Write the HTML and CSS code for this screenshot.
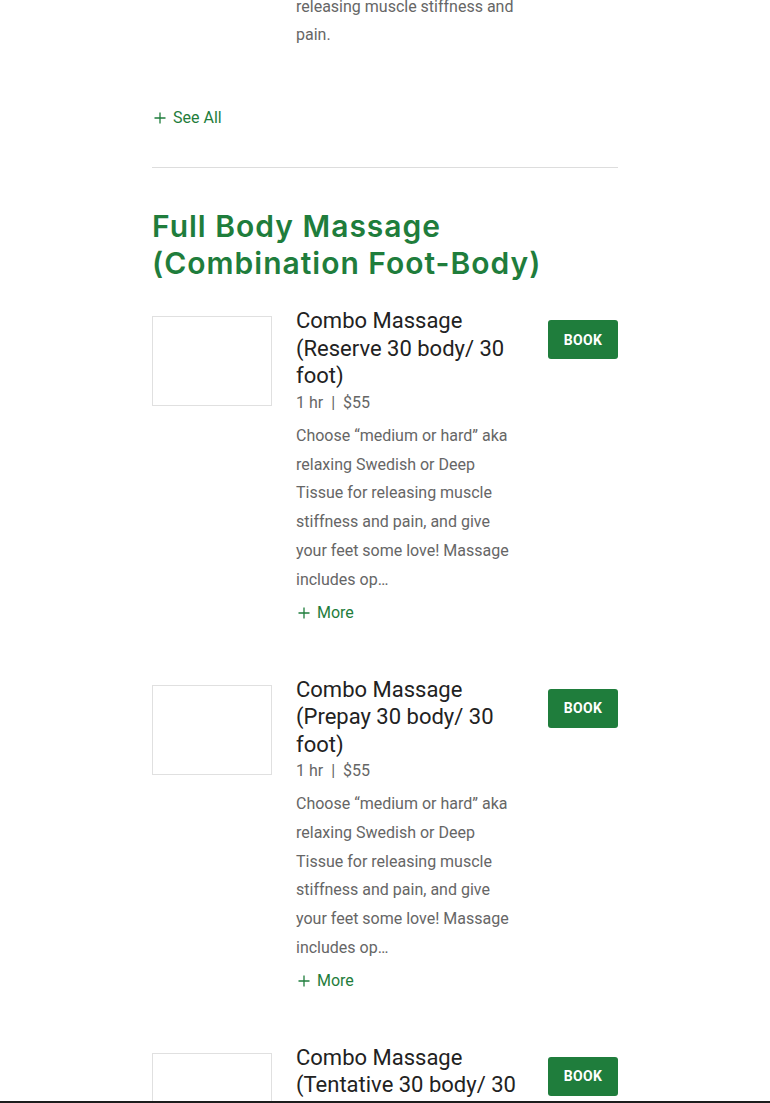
FILE: index.html
```html
<!DOCTYPE html>
<html lang="en">
<head>
  <meta charset="UTF-8">
  <meta name="viewport" content="width=device-width, initial-scale=1.0">
  <title>Services</title>
  <link rel="stylesheet" href="styles.css">
</head>
<body>
  <div class="page">
    <div class="tail">
      <p class="desc">releasing muscle stiffness and pain.</p>
    </div>

    <a class="plus-link see-all" href="#">
      <svg class="plus" viewBox="0 0 12 12"><path d="M6 0.5v11M0.5 6h11"/></svg>
      See All
    </a>

    <hr class="divider">

    <h2 class="category">Full Body Massage (Combination Foot-Body)</h2>

    <div class="service">
      <div class="thumb"></div>
      <div class="info">
        <h3 class="name">Combo Massage (Reserve 30 body/ 30 foot)</h3>
        <div class="meta">1 hr &nbsp;|&nbsp; $55</div>
        <p class="desc">Choose “medium or hard” aka relaxing Swedish or Deep Tissue for releasing muscle stiffness and pain, and give your feet some love! Massage includes op…</p>
        <a class="plus-link" href="#">
          <svg class="plus" viewBox="0 0 12 12"><path d="M6 0.5v11M0.5 6h11"/></svg>
          More
        </a>
      </div>
      <a class="book" href="#">BOOK</a>
    </div>

    <div class="service">
      <div class="thumb"></div>
      <div class="info">
        <h3 class="name">Combo Massage (Prepay 30 body/ 30 foot)</h3>
        <div class="meta">1 hr &nbsp;|&nbsp; $55</div>
        <p class="desc">Choose “medium or hard” aka relaxing Swedish or Deep Tissue for releasing muscle stiffness and pain, and give your feet some love! Massage includes op…</p>
        <a class="plus-link" href="#">
          <svg class="plus" viewBox="0 0 12 12"><path d="M6 0.5v11M0.5 6h11"/></svg>
          More
        </a>
      </div>
      <a class="book" href="#">BOOK</a>
    </div>

    <div class="service">
      <div class="thumb"></div>
      <div class="info">
        <h3 class="name">Combo Massage (Tentative 30 body/ 30 foot)</h3>
        <div class="meta">1 hr &nbsp;|&nbsp; $55</div>
        <p class="desc">Choose “medium or hard” aka relaxing Swedish or Deep Tissue for releasing muscle stiffness and pain, and give your feet some love! Massage includes op…</p>
      </div>
      <a class="book" href="#">BOOK</a>
    </div>
  </div>

  <div class="bottom-bar"></div>
</body>
</html>
```

FILE: styles.css
```css
body {
  margin: 0;
  background-color: #fff;
  font-family: Roboto, "Liberation Sans", Arial, sans-serif;
  color: #222;
  overflow: hidden;
}
.page {
  width: 466px;
  margin: 0 auto;
}
.tail {
  margin-top: -7.4px;
  padding-left: 144px;
  width: 228px;
}
.desc {
  margin: 0;
  font-size: 16px;
  line-height: 28.8px;
  color: #666;
}
.plus-link {
  display: inline-flex;
  align-items: center;
  gap: 7px;
  font-size: 16px;
  line-height: 24px;
  color: #1f7d3c;
  text-decoration: none;
}
.plus {
  width: 12px;
  height: 12px;
  stroke: #1f7d3c;
  stroke-width: 1.3;
  fill: none;
  margin-left: 2px;
}
.see-all {
  margin-top: 55.6px;
}
.divider {
  border: none;
  border-top: 1px solid #ddd;
  margin: 37.5px 0 0;
}
.category {
  margin: 40px 0 25px;
  font-family: Inter, "Open Sans", sans-serif;
  font-weight: 600;
  font-size: 30px;
  line-height: 37px;
  letter-spacing: 1px;
  color: #1f7d3c;
}
.service {
  display: flex;
  align-items: flex-start;
  margin-bottom: 51px;
}
.thumb {
  flex: none;
  width: 118px;
  height: 88px;
  border: 1px solid #e0e0e0;
  margin-top: 9px;
  margin-right: 24px;
}
.info {
  width: 228px;
}
.name {
  margin: 0;
  font-size: 22px;
  line-height: 27.5px;
  font-weight: 400;
  color: #222;
}
.meta {
  margin-top: 1px;
  font-size: 16px;
  line-height: 24px;
  color: #666;
}
.info .desc {
  margin: 7px 0 6px;
}
.book {
  margin-left: auto;
  margin-top: 13px;
  width: 70px;
  height: 39px;
  display: flex;
  align-items: center;
  justify-content: center;
  background-color: #1f7d3c;
  color: #fff;
  border-radius: 3px;
  font-size: 14px;
  font-weight: 700;
  letter-spacing: 0.3px;
  text-decoration: none;
}
.bottom-bar {
  position: fixed;
  left: 0;
  right: 0;
  bottom: 0;
  height: 2px;
  background-color: #1c1c1c;
}
```
